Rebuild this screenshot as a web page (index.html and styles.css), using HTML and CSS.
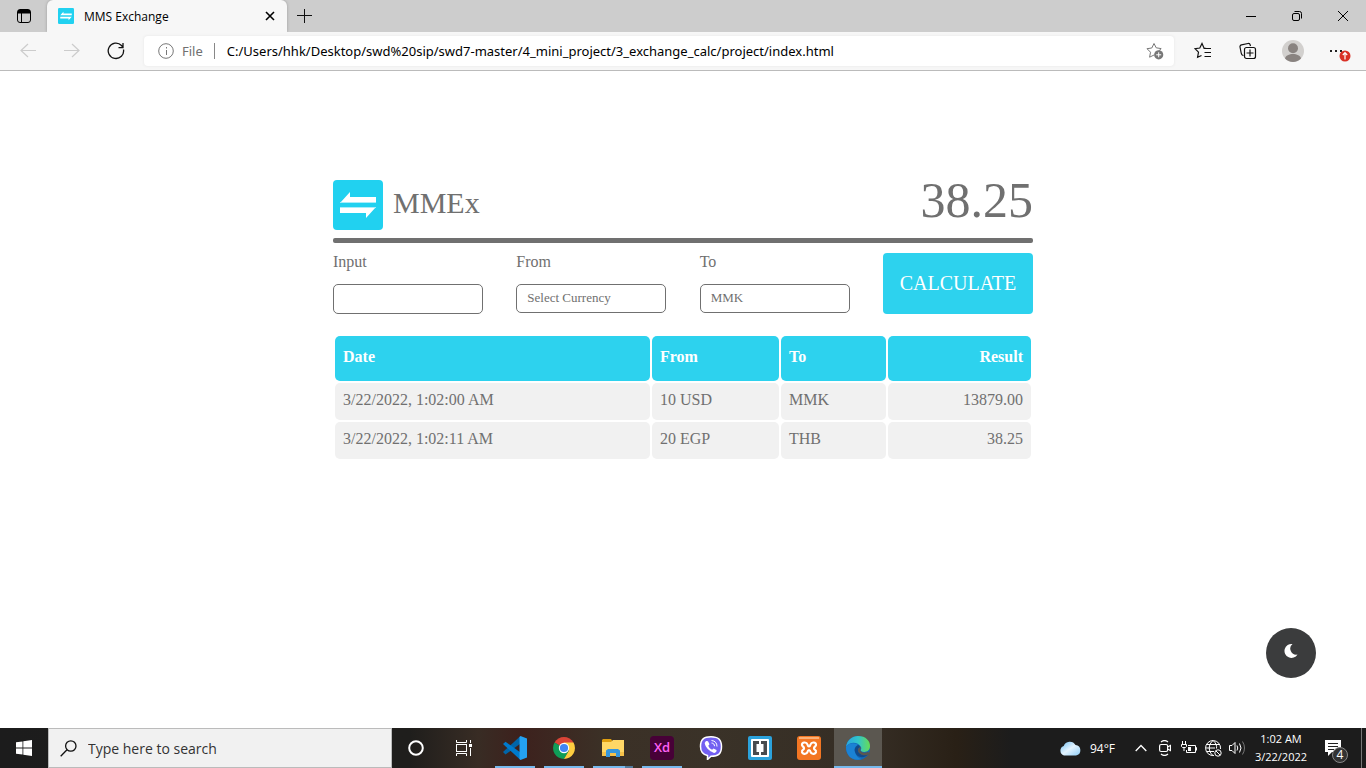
FILE: index.html
```html
<!DOCTYPE html>
<html lang="en">
<head>
<meta charset="utf-8">
<meta name="viewport" content="width=device-width, initial-scale=1">
<title>MMS Exchange</title>
<link rel="stylesheet" href="styles.css">
</head>
<body class="screen">
<header class="browser">
  <div class="tabs">
    <button class="tabs-menu" aria-label="Tab actions"><svg width="16" height="16" viewBox="0 0 16 16" fill="none" stroke="#000"><rect x="1.5" y="1.5" width="13" height="13" rx="2.5"/><path d="M2 3h12M2 4.500h12" stroke-width="2"/><path d="M5.500 5v9"/></svg></button>
    <div class="tab">
      <svg class="favicon" width="16" height="16" viewBox="0 0 50 50"><rect width="50" height="50" rx="4" fill="#21d1f0"/><path d="M7 23 17 12v5h26v6zM43 27 33 38v-5H7v-6z" fill="#fff"/></svg>
      <span class="tab-title">MMS Exchange</span>
      <button class="tab-close" aria-label="Close tab"><svg width="10" height="10" viewBox="0 0 10 10"><path d="m1 1 8 8M9 1 1 9" stroke="#000" stroke-width="1.600"/></svg></button>
    </div>
    <button class="tab-new" aria-label="New tab"><svg width="16" height="16" viewBox="0 0 16 16"><path d="M7.500 1v14M0 7.500h15" stroke="#111"/></svg></button>
    <div class="window-controls">
      <button aria-label="Minimize"><svg width="12" height="12" viewBox="0 0 12 12"><path d="M1 6.500h10" stroke="#000"/></svg></button>
      <button aria-label="Restore"><svg width="12" height="12" viewBox="0 0 12 12" fill="none" stroke="#000"><rect x="1.500" y="3.500" width="7" height="7" rx="1.500"/><path d="M3.500 1.500h5a2 2 0 0 1 2 2v5"/></svg></button>
      <button aria-label="Close"><svg width="12" height="12" viewBox="0 0 12 12"><path d="m1 1 10 10M11 1 1 11" stroke="#000"/></svg></button>
    </div>
  </div>
  <div class="toolbar">
    <div class="nav">
      <button aria-label="Back"><svg width="18" height="16" viewBox="0 0 18 16" fill="none" stroke="#ccc" stroke-width="1.200"><path d="M17 7.500H2M9 1 2 7.500 9 14"/></svg></button>
      <button aria-label="Forward"><svg width="18" height="16" viewBox="0 0 18 16" fill="none" stroke="#ccc" stroke-width="1.200"><path d="M1 7.500h15M9 1l7 6.500L9 14"/></svg></button>
      <button aria-label="Refresh"><svg width="18" height="18" viewBox="0 0 18 18" fill="none" stroke="#111" stroke-width="1.300"><path d="M16.500 7.500A7.700 7.700 0 1 1 14.500 3.500L16 5.300M16 1v4.700h-4.500"/></svg></button>
    </div>
    <div class="address">
      <svg width="16" height="16" viewBox="0 0 16 16" fill="none" stroke="#777"><circle cx="8" cy="8" r="7.300"/><path d="M8.500 7v5M8.500 4v1.500"/></svg>
      <span class="scheme">File</span>
      <input class="url" aria-label="Address" value="C:/Users/hhk/Desktop/swd%20sip/swd7-master/4_mini_project/3_exchange_calc/project/index.html">
      <button aria-label="Add to favorites"><svg width="18" height="18" viewBox="0 0 18 18"><path d="m8 1.500 2.200 4.300 5 .8-3.700 3.600M8 1.500 5.800 6l-4.800.7 3.500 3.500-.9 5L8 13" fill="none" stroke="#777"/><circle cx="12.700" cy="12.800" r="4.600" fill="#777"/><path d="M12.700 10.300v5M10.200 12.800h5" stroke="#fff"/></svg></button>
    </div>
    <div class="tools">
      <button aria-label="Favorites"><svg width="18" height="18" viewBox="0 0 18 18" fill="none" stroke="#111" stroke-width="1.200"><path d="M12.500 6.500 10 6 8 1.500 5.800 6l-4.800.7 3.500 3.500-.9 5L7.500 13.500M9.500 6.500H17M10.500 10.500H17M10.500 14.500H17"/></svg></button>
      <button aria-label="Collections"><svg width="18" height="18" viewBox="0 0 18 18" fill="none" stroke="#111" stroke-width="1.200"><path d="M4.500 13.500C3 13.500 2.500 12.500 2.200 11L1 5c-.2-1 .5-2 1.500-2.200L9 1.500c1.200-.2 2 .5 2.200 1.500l.3 1"/><rect x="5.500" y="5.500" width="11" height="11" rx="2"/><path d="M11 7.500v7M7.500 11h7"/></svg></button>
      <button aria-label="Profile"><svg width="22" height="22" viewBox="0 0 22 22"><circle cx="11" cy="11" r="11" fill="#d2d0ce"/><circle cx="11" cy="8.300" r="5" fill="#898380"/><path d="M3 18.500c1-6 15-6 16 0a11 11 0 0 1-16 0z" fill="#898380"/></svg></button>
      <button class="more" aria-label="Settings and more"><svg width="22" height="22" viewBox="0 0 22 22"><path d="M1 10h2v2H1zM6 10h2v2H6zM11 10h2v2h-2z" fill="#222"/><circle cx="16" cy="16" r="5.500" fill="#d93025"/><path d="M16 19.500V13M13.800 15l2.200-2.300 2.200 2.300" fill="none" stroke="#fff" stroke-width="1.200"/></svg></button>
    </div>
  </div>
</header>

<main class="page">
  <div class="exchange">
    <div class="brand-row">
      <svg class="logo" width="50" height="50" viewBox="0 0 50 50"><rect width="50" height="50" rx="4" fill="#21d1f0"/><path d="M7 23 17 12v5h26v6zM43 27 33 38v-5H7v-6z" fill="#fff"/><path d="M7 23h36v-1H8zM7 27h36l-1 1H7z" fill="#a8edf9"/></svg>
      <h1 class="brand">MMEx</h1>
      <output class="result">38.25</output>
    </div>
    <hr class="rule">
    <form class="calc" onsubmit="return false">
      <div class="field"><label for="amount">Input</label><input class="control" id="amount" type="text"></div>
      <div class="field"><label for="from">From</label><select class="control select" id="from"><option>Select Currency</option></select></div>
      <div class="field"><label for="to">To</label><select class="control select" id="to"><option>MMK</option></select></div>
      <button class="calculate" type="submit">CALCULATE</button>
    </form>
    <table class="history">
      <colgroup><col class="col-date"><col class="col-from"><col class="col-to"><col class="col-result"></colgroup>
      <thead><tr><th>Date</th><th>From</th><th>To</th><th class="end">Result</th></tr></thead>
      <tbody>
        <tr><td>3/22/2022, 1:02:00 AM</td><td>10 USD</td><td>MMK</td><td class="end">13879.00</td></tr>
        <tr><td>3/22/2022, 1:02:11 AM</td><td>20 EGP</td><td>THB</td><td class="end">38.25</td></tr>
      </tbody>
    </table>
  </div>
  <button class="theme" aria-label="Dark mode"><svg width="14" height="16" viewBox="0 0 14 16"><path d="M8.500 1A7 7 0 1 0 13.500 11.500 6 6 0 0 1 8.500 1z" fill="#fff"/></svg></button>
</main>

<footer class="taskbar">
  <button class="start" aria-label="Start"><svg width="16" height="16" viewBox="0 0 16 16" fill="#fff"><path d="M0 2.300 6.500 1.400v6.100H0zM7.300 1.200 16 0v7.500H7.300zM0 8.400h6.500v6.200L0 13.700zM7.300 8.400H16V16l-8.700-1.200z"/></svg></button>
  <div class="search">
    <svg width="17" height="17" viewBox="0 0 17 17" fill="none" stroke="#111" stroke-width="1.300"><circle cx="10.800" cy="6" r="5.200"/><path d="M7 9.800.7 16.200"/></svg>
    <input class="search-input" aria-label="Search" placeholder="Type here to search">
  </div>
  <div class="system-apps">
    <button aria-label="Cortana"><svg width="18" height="18" viewBox="0 0 18 18"><circle cx="9" cy="9" r="6.800" fill="none" stroke="#fff" stroke-width="2"/></svg></button>
    <button aria-label="Task View"><svg width="17" height="16" viewBox="0 0 17 16" fill="none" stroke="#fff"><rect x=".5" y="4.500" width="10" height="7"/><path d="M.5 0v2.500h10V0M.5 16v-2.500h10V16M14.500 0v3M14.500 8v8"/><path d="M13 4h3v3h-3z" fill="#fff" stroke="none"/></svg></button>
  </div>
  <div class="apps">
    <button class="app running" aria-label="Visual Studio Code"><svg width="24" height="24" viewBox="0 0 24 24"><path d="M0 16 17.500 0v7.500L2.500 18.500z" fill="#0065a9"/><path d="M0 8 2.500 5.800 17.500 16.500V24z" fill="#007acc"/><path d="M17.500 0 24 2.600v18.800L17.500 24l-1-1V1z" fill="#24a1f2"/></svg></button>
    <button class="app running" aria-label="Chrome"><svg width="22" height="22" viewBox="0 0 22 22"><path d="M11 11 1.500 5.500a11 11 0 0 1 19 0z" fill="#db4437"/><path d="M1.500 5.500A11 11 0 0 0 11 22l5-8.500-5-2.500z" fill="#0f9d58"/><path d="M20.500 5.500H11l5 8L11 22A11 11 0 0 0 20.500 5.500z" fill="#ffcd40"/><circle cx="11" cy="11" r="5.200" fill="#fff"/><circle cx="11" cy="11" r="4.100" fill="#4285f4"/></svg></button>
    <button class="app running stacked" aria-label="File Explorer"><svg width="22" height="20" viewBox="0 0 22 20"><path d="M1 1h8l2 3H0V2z" fill="#e09f10"/><path d="M0 4h9l2-2h11v16H0z" fill="#ffd766"/><path d="M0 14h22v4H0z" fill="#f5c14a"/><path d="M4 19v-6.500L6 11h10l2 1.500V19h-4v-4H8v4z" fill="#3596dd"/></svg></button>
    <button class="app running" aria-label="Adobe XD"><span class="xd">Xd</span></button>
    <button class="app" aria-label="Viber"><svg width="24" height="24" viewBox="0 0 24 24"><path d="M12 .8c7 0 10.500 2.300 10.500 9.700 0 7.300-3 9.700-10.500 9.700L8.500 23.500v-4C3.500 18.500 1.500 16 1.500 10.500 1.500 3 5 .8 12 .8z" fill="#7360f2" stroke="#fff" stroke-width="1.500"/><path d="m7 5 2 .2 1.500 3-1.200 1.500c.7 2 2 3.300 3.800 4l1.400-1.300 3 1.700c.5 1.500-1 3-2.500 2.800C10 15 6.500 11.500 5.700 7z" fill="#fff"/><path d="M12.500 4.500c3.500.3 5.500 2.500 5.500 6M12.500 7c2 .2 3 1.300 3 3.200" fill="none" stroke="#fff"/></svg></button>
    <button class="app" aria-label="Brackets"><svg width="24" height="24" viewBox="0 0 24 24"><rect width="24" height="24" rx="2" fill="#2ba2dc"/><rect x="3" y="3" width="18" height="18" rx="1" fill="#fff"/><path d="M5 5h6v3H8.500v8H11v3H5zM19 5h-6v3h2.500v8H13v3h6z" fill="#484b4e"/></svg></button>
    <button class="app" aria-label="XAMPP"><svg width="24" height="24" viewBox="0 0 24 24"><rect width="24" height="24" rx="3" fill="#f37623"/><path d="M2 1h20v2H2z" fill="#f9b078"/><path d="M12 10.500Q11 10.500 10.500 8.500C9.500 5.500 4.500 6 5 9.200 5.200 10.700 7 10.300 7 12.200S5.200 13.700 5 15.200C4.500 18.400 9.500 18.900 10.500 15.900Q11 14 12 14t1.500 1.900C14.500 18.900 19.500 18.400 19 15.200 18.800 13.700 17 14.100 17 12.200s1.800-1.500 2-3C19.500 6 14.500 5.500 13.500 8.500Q13 10.500 12 10.500z" fill="none" stroke="#fff" stroke-width="2.200"/></svg></button>
    <button class="app running active" aria-label="Microsoft Edge"><svg width="24" height="24" viewBox="0 0 24 24"><defs><linearGradient id="edge-top"><stop offset="0" stop-color="#2aa5df"/><stop offset=".5" stop-color="#31c5cb"/><stop offset="1" stop-color="#67dc55"/></linearGradient></defs><circle cx="12" cy="12" r="12" fill="#1269b8"/><path d="M0 11C1 4 6 0 12 0c8 0 12 5 12 10 0 6-6 7-9 5-1-1 1-2 0-4C12 6 4 5 0 11z" fill="url(#edge-top)"/><path d="M0 11c3-5 10-4 12-2-3 1-4 4-3 7 1 4 4 7 7 7C7 26 0 20 0 11z" fill="#1b82d4"/><path d="M12 9c-3 2-4 4-3 7 2 6 9 7 13.500 2C18 20 11 18 12 13c.2-1 2-1 2-2-.3-1-1-2-2-2z" fill="#114a8b"/><path d="M14 10.500c2 2-1 3 1 5 2 1.700 5 1.300 7 .2L24 18l-3 1c-4 1-9-1-9-5 0-2 2-2 2-3.500z" fill="#5b5750"/></svg></button>
  </div>
  <div class="tray">
    <button class="weather"><svg width="22" height="16" viewBox="0 0 22 16"><defs><linearGradient id="cloud" x1="0" y1="0" x2="1" y2="1"><stop offset="0" stop-color="#6dbcf0"/><stop offset=".5" stop-color="#e4f4ff"/><stop offset="1" stop-color="#8dccf5"/></linearGradient></defs><path d="M5 15.500a5 5 0 0 1-.3-9.500A6.500 6.500 0 0 1 16.500 5 5.300 5.300 0 0 1 17 15.500z" fill="url(#cloud)"/></svg>94°F</button>
    <div class="tray-icons">
      <button aria-label="Show hidden icons"><svg width="12" height="8" viewBox="0 0 12 8"><path d="m.7 7 5.300-5.500L11.300 7" fill="none" stroke="#fff" stroke-width="1.300"/></svg></button>
      <button aria-label="Meet now"><svg width="12" height="16" viewBox="0 0 12 16" fill="none" stroke="#fff" stroke-width="1.200"><rect x=".6" y="4.500" width="8" height="7" rx="1.500"/><path d="m8.500 7 3-1.500v5l-3-1.500M2 2c2-1.700 5-1.700 7 0M2 14c2 1.700 5 1.700 7 0"/></svg></button>
      <button aria-label="Battery"><svg width="16" height="14" viewBox="0 0 16 14" fill="none" stroke="#fff"><path d="M7 4.500h7.500v7h-9V9M14.500 6.500h1v3M1.500 0v3M4.500 0v3M.5 3.500h5v2l-1 1h-3l-1-1zM3 7v3"/><path d="M7 6h3v4H7z" fill="#fff" stroke="none"/></svg></button>
      <button aria-label="Network"><svg width="17" height="17" viewBox="0 0 17 17" fill="none" stroke="#fff"><path d="M9 15.500A7.500 7.500 0 1 1 15.500 9M8 .5c-5 4-5 11 0 15M8 .5c3 2.500 4 5 3.500 8M.5 8H10M1.500 4.500h13M1.500 11.500H9"/><circle cx="13" cy="13" r="3.200"/><path d="m11 11 4 4"/></svg></button>
      <button aria-label="Volume"><svg width="17" height="14" viewBox="0 0 17 14" fill="none" stroke="#fff"><path d="M.5 4.500h2.500l3-3v11l-3-3H.5zM8 4.500q1.500 2.500 0 5M10.500 2.500q3 4.500 0 9"/><path d="M13.500.5q4 6.500 0 13" stroke="#777"/></svg></button>
    </div>
    <button class="clock"><time>1:02 AM</time><time>3/22/2022</time></button>
    <button class="notices" aria-label="Notifications, 4 new"><svg width="17" height="17" viewBox="0 0 17 17"><path d="M0 0h16v12H7l-4 4v-4H0z" fill="#fff"/><path d="M3 3.500h10M3 6.500h10M3 9.500h6" stroke="#222"/></svg><span class="count">4</span></button>
  </div>
</footer>
</body>
</html>
```
FILE: styles.css
```css
* { box-sizing: border-box; }

.screen {
  margin: 0;
  min-height: 100vh;
  display: flex;
  flex-direction: column;
  background: #fff;
  color: #000;
  font-family: "Open Sans", "Noto Sans", sans-serif;
  font-size: 12px;
}

button, input, select { font: inherit; color: inherit; margin: 0; }

button {
  display: flex;
  align-items: center;
  justify-content: center;
  padding: 0;
  border: 0;
  background: none;
}

/* Browser window */
.tabs {
  display: flex;
  height: 32px;
  background: #cdcdcd;
}
.tabs-menu { width: 47px; }
.tab {
  display: flex;
  align-items: center;
  width: 240px;
  padding: 0 12px 0 11px;
  gap: 10px;
  background: #f7f7f7;
  border-radius: 6px 6px 0 0;
  box-shadow: 0 0 3px #999;
  clip-path: inset(0 -4px 0 -4px);
}
.tab-title { flex: 1; }
.tab-new { width: 36px; }
.window-controls {
  display: flex;
  margin-left: auto;
}
.window-controls button { width: 46px; }

.toolbar {
  display: flex;
  align-items: center;
  height: 39px;
  background: #f7f7f7;
  border-bottom: 1px solid #bbb;
}
.nav {
  display: flex;
  padding: 0 6px;
}
.nav button { width: 44px; }
.address {
  display: flex;
  flex: 1;
  align-items: center;
  height: 30px;
  padding: 0 10px 0 14px;
  gap: 8px;
  background: #fff;
  border-radius: 4px;
  box-shadow: 0 0 3px #e4e4e4;
  font-family: "Noto Sans", "Open Sans", sans-serif;
  font-size: 13px;
}
.scheme {
  color: #707070;
  padding-right: 11px;
  border-right: 1px solid #888;
  line-height: 16px;
}
.url {
  flex: 1;
  min-width: 0;
  padding: 0 0 0 4px;
  border: 0;
  outline: 0;
  background: none;
}
.tools {
  display: flex;
  padding: 0 6px;
}
.tools button { width: 45px; }
.tools .more { width: 45px; padding-left: 5px; }

/* Exchange calculator */
.page {
  flex: 1;
  padding: 109px 16px 16px;
  background: #fff;
  color: #707070;
  font-family: "Liberation Serif", "Times New Roman", serif;
  font-size: 16px;
  line-height: 18px;
}
.exchange {
  max-width: 700px;
  margin: 0 auto;
}
.brand-row {
  display: flex;
  align-items: center;
  gap: 10px;
}
.brand {
  margin: 0;
  font-size: 30px;
  font-weight: 400;
  line-height: 34px;
  padding-bottom: 4px;
}
.result {
  margin-left: auto;
  font-size: 50px;
  line-height: 40px;
  padding-bottom: 10px;
}
.rule {
  height: 5px;
  margin: 8px 0 10px;
  border: 0;
  border-radius: 2px;
  background: #707070;
}
.calc {
  display: flex;
  flex-wrap: wrap;
  justify-content: space-between;
  gap: 10px;
}
.field {
  display: flex;
  flex-direction: column;
  width: 150px;
  gap: 13px;
}
.control {
  width: 100%;
  height: 30px;
  padding: 0 10px;
  border: 1px solid #707070;
  border-radius: 5px;
  background: #fff;
  color: #707070;
  font-size: 13px;
}
.select {
  height: 29px;
  padding-bottom: 1px;
  appearance: none;
}
.calculate {
  width: 150px;
  padding-bottom: 2px;
  border-radius: 4px;
  background: #2dd2ee;
  color: #fff;
  font-size: 20px;
}
.history {
  width: 100%;
  margin-top: 20px;
  border-spacing: 2px;
  table-layout: fixed;
}
.col-date { width: 315px; }
.col-from { width: 127px; }
.col-to { width: 105px; }
.history th, .history td {
  text-align: left;
  border-radius: 5px;
}
.history th {
  padding: 12px 8px 15px;
  background: #2dd2ee;
  color: #fff;
}
.history td {
  padding: 8px 8px 11px;
  background: #f1f1f1;
}
.history .end { text-align: right; }
.theme {
  position: fixed;
  right: 50px;
  bottom: 90px;
  width: 50px;
  height: 50px;
  padding-bottom: 4px;
  border-radius: 50%;
  background: #3b3c3d;
}

/* Taskbar */
.taskbar {
  display: flex;
  height: 40px;
  background: linear-gradient(90deg, #1c1c1c 0, #1f1e1c 30%, #382c24 35%, #3d211d 38%, #3b3026 44%, #3a3228 52%, #352d24 64%, #292016 70%, #1c1c1c 74%);
  color: #fff;
}
.start { width: 48px; }
.search {
  display: flex;
  align-items: center;
  width: 344px;
  padding: 0 11px;
  gap: 11px;
  border: 1px solid #bbb;
  background: #f1f1f1;
  color: #333;
  font-size: 14px;
}
.search-input {
  flex: 1;
  min-width: 0;
  padding: 0;
  border: 0;
  background: none;
}
.search-input::placeholder { color: #333; opacity: 1; }
.system-apps, .apps, .tray, .tray-icons { display: flex; }
.system-apps button, .app { width: 48px; }
.apps {
  gap: 1px;
  margin-left: 3px;
}
.running {
  background: linear-gradient(#76b9ed, #76b9ed) center bottom / 40px 2px no-repeat;
}
.stacked {
  background-image: linear-gradient(90deg, #76b9ed 80%, #527b9c 80%);
}
.active {
  background-color: #5b5750;
  background-size: 100% 2px;
}
.xd {
  width: 24px;
  height: 24px;
  border-radius: 4px;
  background: #470137;
  color: #ff61f6;
  font-size: 13px;
  font-weight: 600;
  line-height: 23px;
}
.tray {
  margin-left: auto;
  padding-right: 4px;
}
.weather {
  gap: 9px;
  margin-right: 12px;
  padding-right: 2px;
}
.tray-icons button { width: 24px; }
.clock {
  flex-direction: column;
  width: 64px;
  font-size: 11px;
  line-height: 18px;
}
.notices {
  position: relative;
  width: 49px;
  padding-right: 8px;
  border-right: 1px solid #777;
}
.count {
  position: absolute;
  left: 19px;
  top: 19px;
  width: 16px;
  height: 16px;
  border: 1px solid #888;
  border-radius: 50%;
  background: #333;
  line-height: 14px;
}
```
